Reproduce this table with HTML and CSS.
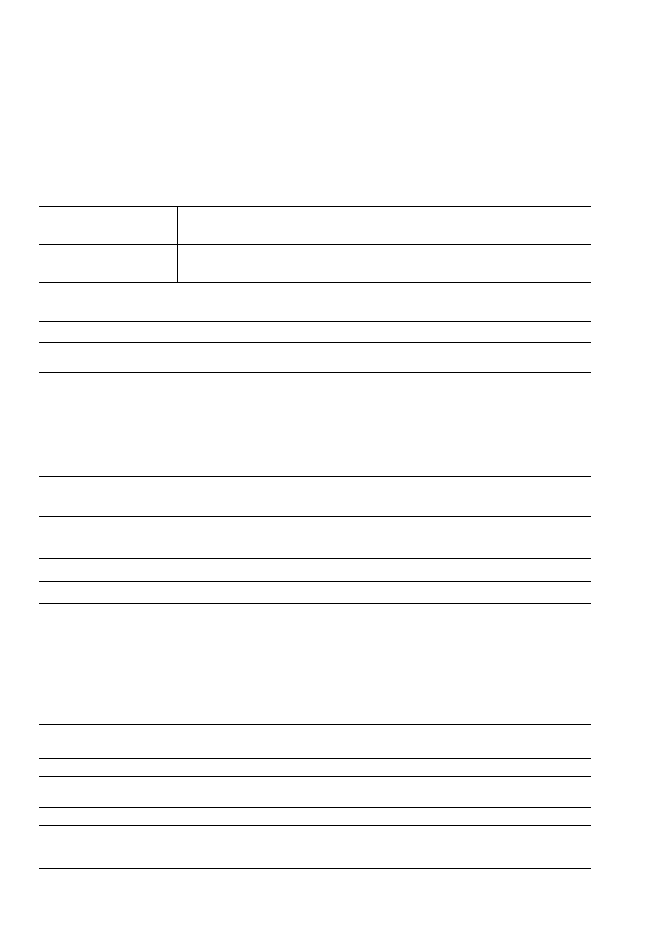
FILE: index.html
```html
<!DOCTYPE html>
<html>
<head>
<meta charset="utf-8">
<link rel="stylesheet" href="styles.css">
</head>
<body>
<div class="page">
  <div class="section s1">
    <div class="row split r38"><div class="label"></div><div class="value"></div></div>
    <div class="row split r38"><div class="label"></div><div class="value"></div></div>
    <div class="row r39"></div>
    <div class="row r21"></div>
    <div class="row r30 last"></div>
  </div>
  <div class="section s2">
    <div class="row r40"></div>
    <div class="row r42"></div>
    <div class="row r23"></div>
    <div class="row r22 last"></div>
  </div>
  <div class="section s3">
    <div class="row r34"></div>
    <div class="row r18"></div>
    <div class="row r31"></div>
    <div class="row r18"></div>
    <div class="row r43 last"></div>
  </div>
</div>
</body>
</html>
```
FILE: styles.css
```css
html, body {
  margin: 0;
  padding: 0;
  background: #fff;
  font-family: "Liberation Sans", Arial, sans-serif;
}
.page {
  padding: 206px 0 0 39px;
  width: 552px;
}
.section {
  display: flex;
  flex-direction: column;
}
.s2 { margin-top: 103px; }
.s3 { margin-top: 120px; }
.row {
  border-top: 1px solid #000;
  box-sizing: content-box;
}
.row.last { border-bottom: 1px solid #000; }
.split { display: flex; }
.label {
  width: 138px;
  border-right: 1px solid #000;
}
.value { flex: 1; }
.r18 { height: 17px; }
.r21 { height: 20px; }
.r22 { height: 21px; }
.r23 { height: 22px; }
.r30 { height: 29px; }
.r31 { height: 30px; }
.r34 { height: 33px; }
.r38 { height: 37px; }
.r39 { height: 38px; }
.r40 { height: 39px; }
.r42 { height: 41px; }
.r43 { height: 42px; }
```
